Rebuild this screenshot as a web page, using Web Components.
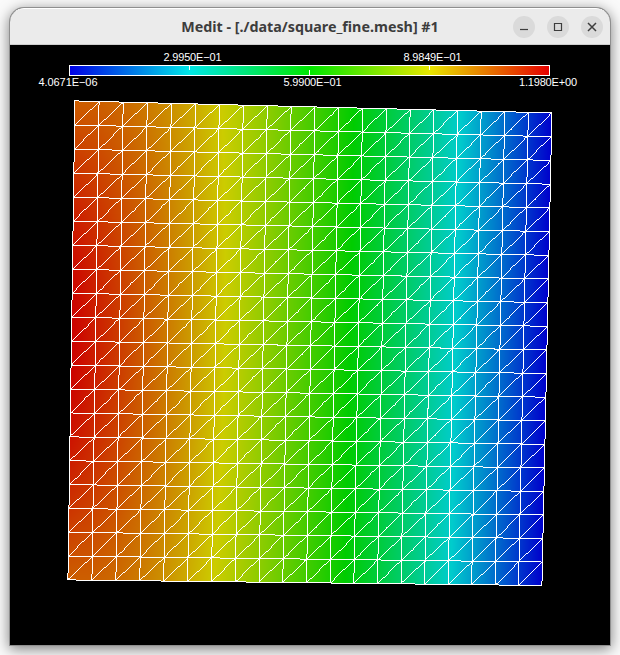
<!DOCTYPE html>
<html lang="en"><head><meta charset="utf-8"><title>Medit</title>
<style>html,body{margin:0;width:620px;height:655px;overflow:hidden;background:#fff}</style></head>
<body><medit-window><window-bar slot="bar">Medit - [./data/square_fine.mesh] #1</window-bar><color-scale></color-scale><mesh-view></mesh-view></medit-window>
<script>
const define=(name,html,init)=>customElements.define(name,class extends HTMLElement{
  constructor(){super();this.attachShadow({mode:'open'}).innerHTML=html;if(init)init(this.shadowRoot);}
});
define('medit-window',`<style>
:host{display:block;box-sizing:border-box;width:620px;height:655px;padding:8px 10px 10px;background:#fafafa}
.frame{height:637px;width:600px;background:#000;border-radius:14px 14px 0 0;box-shadow:0 0 0 1px #8f8f8f,0 3px 14px 1px rgba(0,0,0,.5);display:flex;flex-direction:column}
.body{flex:1;display:flex;flex-direction:column}
</style><div class="frame"><slot name="bar"></slot><div class="body"><slot></slot></div></div>`);
define('window-bar',`<style>
:host{display:grid;grid-template-columns:1fr auto 1fr;align-items:center;height:37px;box-sizing:border-box;background:#ebebeb;border-radius:14px 14px 0 0;border-top:1px solid #fff;border-bottom:1px solid #cfcfcf;color:#3d3d3d;font:bold 14.3px/20px "Noto Sans","Open Sans",sans-serif}
.t{grid-column:2;white-space:nowrap;width:258px;display:flex;justify-content:center}
.b{display:flex;gap:12px;justify-content:flex-end;padding-right:7px}
svg{display:block;width:22px;height:22px;fill:none;stroke:#3d3d3d;stroke-width:1.2}
circle{fill:#dadada;stroke:none}
</style><div class="t"><slot></slot></div><div class="b">
<svg viewBox="0 0 22 22"><circle cx="11" cy="11" r="11"/><path d="M7 13.5h8"/></svg>
<svg viewBox="0 0 22 22"><circle cx="11" cy="11" r="11"/><path d="M7.5 7.5h7v7h-7z"/></svg>
<svg viewBox="0 0 22 22"><circle cx="11" cy="11" r="11"/><path d="M7 7l8 8M15 7l-8 8" stroke-width="1.5"/></svg></div>`);
define('color-scale',`<style>
:host{display:block;height:55px;color:#fff;font:11px/12px "Liberation Sans",sans-serif}
svg{display:block}text{fill:#fff}
</style><svg width="600" height="55" viewBox="10 45 600 55"><defs><linearGradient id="g"><stop offset="0" stop-color="#0000e6"/><stop offset=".25" stop-color="#00e6e6"/><stop offset=".5" stop-color="#00e600"/><stop offset=".75" stop-color="#e6e600"/><stop offset="1" stop-color="#e60000"/></linearGradient></defs>
<rect x="69.5" y="65.5" width="480" height="10" fill="url(#g)" stroke="#fff"/>
<path d="M189.5 66v4M309.5 70v5M429.5 66v4" stroke="#fff"/>
<text x="163.5" y="61" textLength="58">2.9950E−01</text><text x="403.5" y="61" textLength="58">8.9849E−01</text>
<text x="38.5" y="86" textLength="59">4.0671E−06</text><text x="283.5" y="86" textLength="58">5.9900E−01</text><text x="519" y="86" textLength="58">1.1980E+00</text></svg>`);
define('mesh-view',`<style>:host{display:block;height:545px}canvas{display:block}</style><canvas width="600" height="545"></canvas>`,root=>{
  const W=600,H=545,N=20,ctx=root.querySelector('canvas').getContext('2d'),img=ctx.createImageData(W,H),d=img.data;
  const put=(x,y,r,g,b)=>{if(x<0||y<0||x>=W||y>=H)return;const k=(y*W+x)*4;d[k]=r;d[k+1]=g;d[k+2]=b;d[k+3]=255;};
  // Corners of the unit square on the canvas, joined by a projective map
  const x0=64.4,y0=.4,x1=541.4,y1=12.4,x2=531.4,y2=485,x3=57.4,y3=479.4;
  const dx1=x1-x2,dx2=x3-x2,dx3=x0-x1+x2-x3,dy1=y1-y2,dy2=y3-y2,dy3=y0-y1+y2-y3,D=dx1*dy2-dx2*dy1;
  const g=(dx3*dy2-dx2*dy3)/D,h=(dx1*dy3-dx3*dy1)/D;
  const a=x1-x0+g*x1,b=x3-x0+h*x3,c=y1-y0+g*y1,e=y3-y0+h*y3;
  const P=(u,v)=>{const w=g*u+h*v+1;return[(a*u+b*v+x0)/w,(c*u+e*v+y0)/w];};
  // Field: 1 at the middle of the left side, 0 on the right side
  const F=(u,v)=>Math.max(0,1-.7*u-.23*u*u-.07*u*u*u-.115*(1-Math.sin(Math.PI*v))*Math.exp(-6*u)*(1-u));
  const color=t=>{const s=Math.min(1,t)*4,m=204;return s<1?[0,m*s,m]:s<2?[0,m,m*(2-s)]:s<3?[m*(s-2),m,0]:[m,m*(4-s),0];};
  const tri=(A,B,C)=>{
    const [[ax,ay],at]=A,[[bx,by],bt]=B,[[cx,cy],ct]=C,q=(bx-ax)*(cy-ay)-(cx-ax)*(by-ay);
    for(let y=Math.floor(Math.min(ay,by,cy));y<=Math.max(ay,by,cy);y++)for(let x=Math.floor(Math.min(ax,bx,cx));x<=Math.max(ax,bx,cx);x++){
      const m=((x-ax)*(cy-ay)-(cx-ax)*(y-ay))/q,n=((bx-ax)*(y-ay)-(x-ax)*(by-ay))/q;
      if(m>=-.001&&n>=-.001&&m+n<=1.001)put(x,y,...color(at+m*(bt-at)+n*(ct-at)));
    }};
  const line=(p,q)=>{const n=Math.ceil(Math.max(Math.abs(q[0]-p[0]),Math.abs(q[1]-p[1])));for(let i=0;i<=n;i++)put(Math.round(p[0]+(q[0]-p[0])*i/n),Math.round(p[1]+(q[1]-p[1])*i/n),255,255,255);};
  const V=(i,j)=>[P(i/N,j/N),F(i/N,j/N)];
  for(let j=0;j<N;j++)for(let i=0;i<N;i++){tri(V(i,j),V(i+1,j),V(i,j+1));tri(V(i+1,j),V(i+1,j+1),V(i,j+1));}
  for(let j=0;j<=N;j++)for(let i=0;i<=N;i++){
    if(i<N)line(P(i/N,j/N),P((i+1)/N,j/N));
    if(j<N)line(P(i/N,j/N),P(i/N,(j+1)/N));
    if(i<N&&j<N)line(P(i/N,(j+1)/N),P((i+1)/N,j/N));
  }
  ctx.putImageData(img,0,0);
});
</script></body></html>
